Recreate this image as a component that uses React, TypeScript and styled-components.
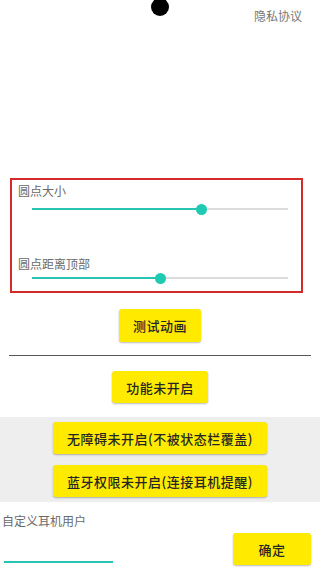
import React from "react";
import styled, { createGlobalStyle } from "styled-components";

const teal = "#26c4b1";
const yellow = "#ffea00";

const GlobalStyle = createGlobalStyle`
  html, body {
    margin: 0;
    padding: 0;
    background: #ffffff;
  }
  * {
    box-sizing: border-box;
  }
  body {
    font-family: "Noto Sans CJK SC", "Noto Sans", sans-serif;
  }
`;

const Page = styled.div`
  width: 320px;
  height: 568px;
  overflow: hidden;
  background: #ffffff;
  display: flex;
  flex-direction: column;
`;

const Header = styled.header`
  height: 178px;
  display: grid;
  grid-template-columns: 1fr auto 1fr;
  align-items: start;
`;

const Dot = styled.div`
  grid-column: 2;
  width: 18px;
  height: 18px;
  margin-top: -2px;
  border-radius: 50%;
  background: #000000;
`;

const Privacy = styled.a`
  grid-column: 3;
  justify-self: end;
  margin: 8px 18px 0 0;
  font-size: 12px;
  line-height: 16px;
  color: #777777;
  text-decoration: none;
`;

const SettingsBox = styled.section`
  width: 293px;
  height: 115px;
  margin-left: 10px;
  border: 2px solid #d42a2a;
  padding: 3px 0 0 6px;
  display: flex;
  flex-direction: column;
`;

const Label = styled.div<{ $gap?: number }>`
  font-size: 12px;
  line-height: 16px;
  color: #6a6a6a;
  margin-top: ${(p) => p.$gap ?? 0}px;
`;

const SliderRow = styled.div<{ $gap?: number }>`
  position: relative;
  height: 12px;
  margin: ${(p) => p.$gap ?? 0}px 0 0 14px;
  width: 256px;
  display: flex;
  align-items: center;
`;

const Track = styled.div`
  position: relative;
  width: 100%;
  height: 2px;
  background: #dcdcdc;
`;

const Fill = styled.div`
  height: 100%;
  background: ${teal};
`;

const Thumb = styled.div`
  position: absolute;
  top: 50%;
  width: 11px;
  height: 11px;
  margin: -5.5px 0 0 -5.5px;
  border-radius: 50%;
  background: #1fcab3;
`;

const Slider = ({ value, gap }: { value: number; gap?: number }) => (
  <SliderRow $gap={gap}>
    <Track>
      <Fill style={{ width: `${value}%` }} />
      <Thumb style={{ left: `${value}%` }} />
    </Track>
  </SliderRow>
);

const Center = styled.div<{ $gap: number }>`
  display: flex;
  justify-content: center;
  margin-top: ${(p) => p.$gap}px;
`;

const YellowButton = styled.button<{ $tall?: boolean; $min?: number }>`
  height: ${(p) => (p.$tall ? 33 : 32)}px;
  min-width: ${(p) => p.$min ?? 0}px;
  padding: 0 14px;
  border: none;
  border-radius: 3px;
  background: ${yellow};
  color: #262626;
  font-family: "Noto Sans CJK SC", "Noto Sans", sans-serif;
  font-size: 13px;
  font-weight: 500;
  letter-spacing: 0.5px;
  box-shadow: 0 1px 2px rgba(0, 0, 0, 0.28);
  white-space: nowrap;
`;

const Divider = styled.hr`
  margin: 13px 9px 0 9px;
  border: none;
  height: 1px;
  background: #555555;
`;

const GrayPanel = styled.section`
  margin-top: 14px;
  height: 85px;
  background: #eeeeee;
  padding-top: 5px;
  display: flex;
  flex-direction: column;
  align-items: center;
  gap: 11px;
`;

const UserLabel = styled.div`
  margin: 11px 0 0 2px;
  font-size: 12px;
  line-height: 16px;
  color: #6a6a6a;
`;

const InputRow = styled.div`
  margin-top: 4px;
  height: 32px;
  display: flex;
  justify-content: space-between;
  align-items: flex-start;
  padding: 0 9px 0 4px;
`;

const NameInput = styled.input`
  width: 109px;
  height: 30px;
  border: none;
  border-bottom: 2px solid ${teal};
  outline: none;
  background: transparent;
  font-size: 13px;
  font-family: "Noto Sans CJK SC", "Noto Sans", sans-serif;
`;

const App = () => {
  return (
    <Page>
      <GlobalStyle />
      <Header>
        <Dot />
        <Privacy href="#">隐私协议</Privacy>
      </Header>
      <SettingsBox>
        <Label>圆点大小</Label>
        <Slider value={66.4} gap={4} />
        <Label $gap={41}>圆点距离顶部</Label>
        <Slider value={50} gap={0} />
      </SettingsBox>
      <Center $gap={16}>
        <YellowButton $tall>测试动画</YellowButton>
      </Center>
      <Divider />
      <Center $gap={15}>
        <YellowButton>功能未开启</YellowButton>
      </Center>
      <GrayPanel>
        <YellowButton>无障碍未开启(不被状态栏覆盖)</YellowButton>
        <YellowButton>蓝牙权限未开启(连接耳机提醒)</YellowButton>
      </GrayPanel>
      <UserLabel>自定义耳机用户</UserLabel>
      <InputRow>
        <NameInput type="text" />
        <YellowButton $min={78}>确定</YellowButton>
      </InputRow>
    </Page>
  );
};

export default App;
